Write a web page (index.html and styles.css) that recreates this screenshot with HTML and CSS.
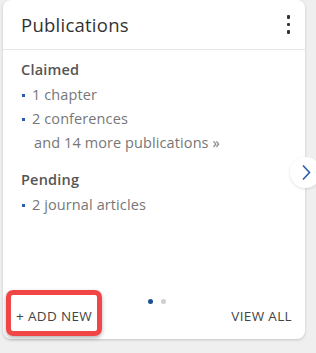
FILE: index.html
```html
<!DOCTYPE html>
<html>
<head>
<meta charset="utf-8">
<link rel="stylesheet" href="styles.css">
</head>
<body>
<div class="card">
  <div class="header">
    <h2 class="title">Publications</h2>
    <div class="kebab"><span></span><span></span><span></span></div>
  </div>
  <div class="body">
    <h3 class="section">Claimed</h3>
    <ul class="list">
      <li>1 chapter</li>
      <li>2 conferences</li>
    </ul>
    <div class="more">and 14 more publications »</div>
    <h3 class="section pending">Pending</h3>
    <ul class="list">
      <li>2 journal articles</li>
    </ul>
  </div>
  <div class="pager"><span class="dot active"></span><span class="dot"></span></div>
  <div class="footer">
    <a class="btn add">+ ADD NEW</a>
    <a class="btn">VIEW ALL</a>
  </div>
  <div class="next">
    <svg width="10" height="17" viewBox="0 0 10 17"><path d="M2 1.5 L8.5 8.5 L2 15.5" fill="none" stroke="#2a5ea8" stroke-width="1.6"/></svg>
  </div>
</div>
</body>
</html>
```
FILE: styles.css
```css
html, body { margin: 0; padding: 0; }
body {
  background: #efefef;
  width: 316px;
  height: 353px;
  overflow: hidden;
  font-family: "Open Sans", "Liberation Sans", sans-serif;
}
.card {
  position: relative;
  margin-left: 3px;
  width: 302px;
  height: 339px;
  background: #fff;
  border-radius: 8px;
  box-shadow: 0 1px 3px rgba(0,0,0,0.18);
  display: flex;
  flex-direction: column;
  box-sizing: border-box;
}
.header {
  height: 50px;
  border-bottom: 1px solid #e6e6e6;
  display: flex;
  align-items: center;
  justify-content: space-between;
  padding: 0 13px 0 18px;
  box-sizing: border-box;
}
.title {
  margin: 0;
  font-size: 18.5px;
  font-weight: 400;
  color: #333;
  letter-spacing: 0.25px;
  position: relative;
  top: 0;
}
.kebab {
  display: flex;
  flex-direction: column;
  gap: 4px;
  padding: 0 2px;
}
.kebab span {
  width: 3.5px;
  height: 3.5px;
  background: #333;
  border-radius: 1px;
}
.body {
  padding: 10px 18px 0;
  flex: 1;
}
.section {
  margin: 0;
  font-size: 14.5px;
  font-weight: 600;
  color: #555;
  line-height: 20px;
  letter-spacing: 0.2px;
}
.section.pending { margin-top: 15px; }
.list {
  list-style: none;
  margin: 3px 0 0;
  padding: 0;
}
.list li {
  font-size: 14.5px;
  color: #777;
  line-height: 24px;
  position: relative;
  padding-left: 11px;
  letter-spacing: 0.1px;
}
.list li::before {
  content: "";
  position: absolute;
  left: 1px;
  top: 11px;
  width: 3px;
  height: 3px;
  background: #2a5ea8;
}
.more {
  font-size: 14.5px;
  color: #777;
  line-height: 24px;
  padding-left: 13px;
  letter-spacing: 0.1px;
}
.pager {
  display: flex;
  justify-content: center;
  gap: 8px;
  padding-left: 5px;
}
.dot {
  width: 5px;
  height: 5px;
  border-radius: 50%;
  background: #cfcfcf;
}
.dot.active { background: #1d4f91; }
.footer {
  display: flex;
  justify-content: space-between;
  align-items: center;
  padding: 0 13px;
  height: 24px;
  margin-bottom: 11px;
}
.btn {
  font-size: 13.5px;
  color: #444;
  letter-spacing: 0.35px;
}
.add {
  position: relative;
}
.add::after {
  content: "";
  position: absolute;
  left: -10px;
  right: -10px;
  top: -17px;
  bottom: -11px;
  border: 5px solid #f04646;
  border-radius: 7px;
  box-shadow: 0 2px 4px rgba(0,0,0,0.3);
}
.next {
  position: absolute;
  left: 287px;
  top: 157px;
  width: 31px;
  height: 31px;
  border-radius: 50%;
  background: #fff;
  box-shadow: 0 1px 3px rgba(0,0,0,0.12);
  display: flex;
  align-items: center;
  justify-content: center;
}
```
